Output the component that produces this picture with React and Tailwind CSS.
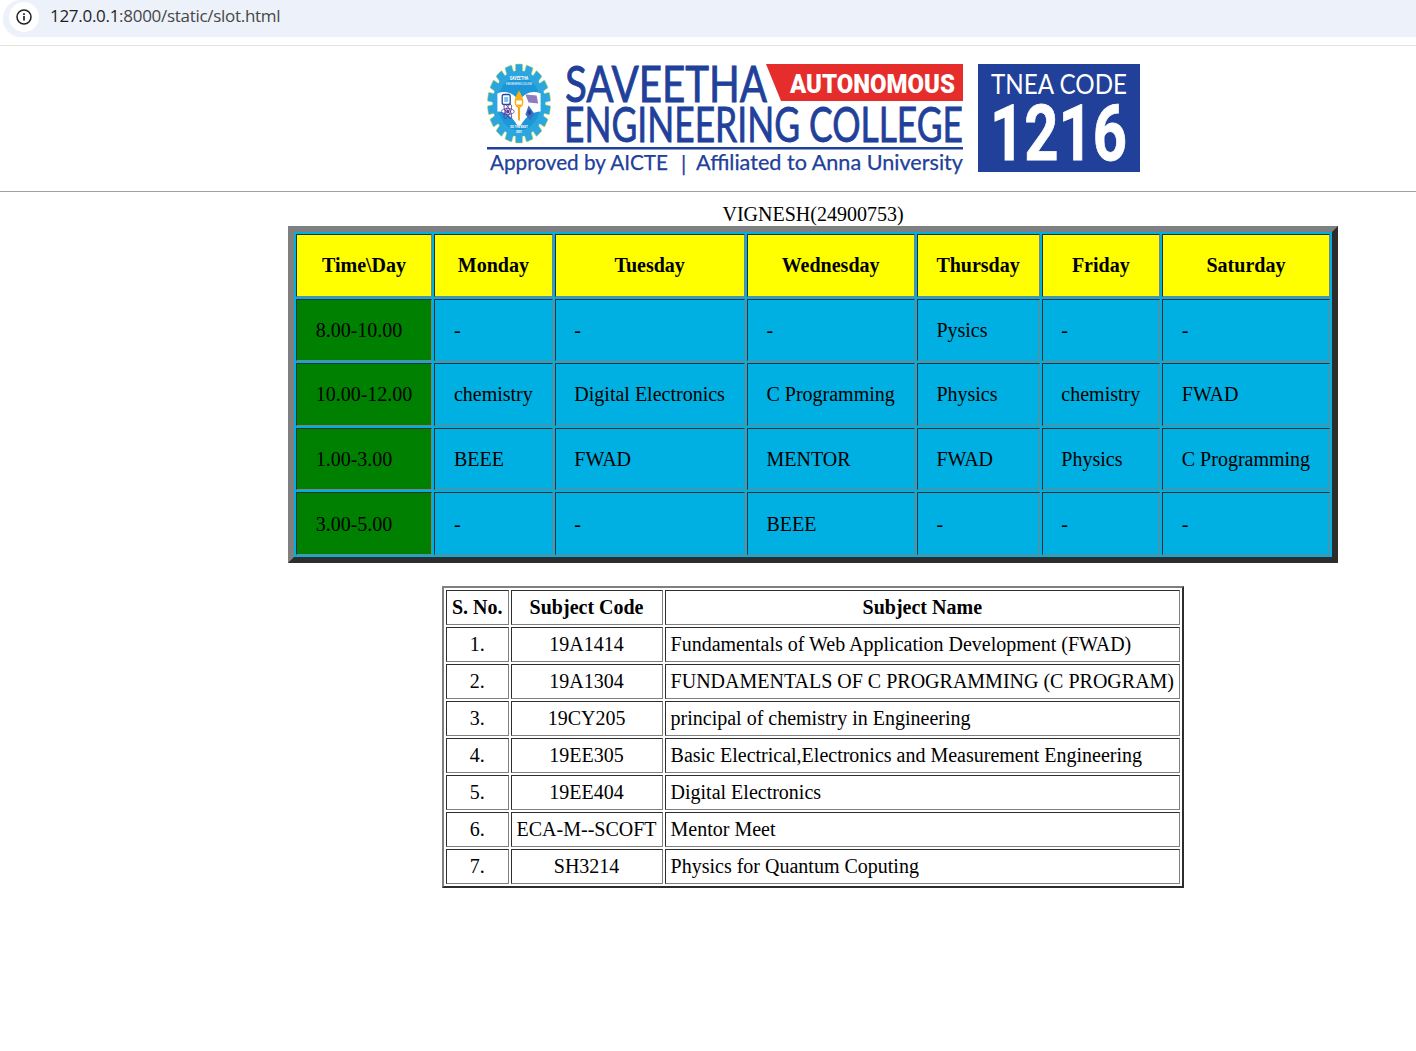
const days = ["Time\\Day", "Monday", "Tuesday", "Wednesday", "Thursday", "Friday", "Saturday"];
const slots = [
  ["8.00-10.00", "-", "-", "-", "Pysics", "-", "-"],
  ["10.00-12.00", "chemistry", "Digital Electronics", "C Programming", "Physics", "chemistry", "FWAD"],
  ["1.00-3.00", "BEEE", "FWAD", "MENTOR", "FWAD", "Physics", "C Programming"],
  ["3.00-5.00", "-", "-", "BEEE", "-", "-", "-"],
];
const subjects = [
  ["1.", "19A1414", "Fundamentals of Web Application Development (FWAD)"],
  ["2.", "19A1304", "FUNDAMENTALS OF C PROGRAMMING (C PROGRAM)"],
  ["3.", "19CY205", "principal of chemistry in Engineering"],
  ["4.", "19EE305", "Basic Electrical,Electronics and Measurement Engineering"],
  ["5.", "19EE404", "Digital Electronics"],
  ["6.", "ECA-M--SCOFT", "Mentor Meet"],
  ["7.", "SH3214", "Physics for Quantum Coputing"],
];

const inset = "border border-t-[#2d2d2d] border-l-[#2d2d2d] border-r-[#808080] border-b-[#808080]";
const teeth = Array.from({ length: 18 }, (_, i) => i * 20);

function Emblem() {
  return (
    <g transform="translate(519 103.5) scale(0.8 1)">
      {teeth.map((a) => (
        <rect key={a} x="-4.5" y="-39.5" width="9" height="10" rx="1" fill="#2ba6de" stroke="#cfe05a" strokeWidth="0.6" transform={`rotate(${a})`} />
      ))}
      <circle r="33" fill="#2ba6de" />
      <circle r="27" fill="#1e97d8" />
      <text y="-24" textAnchor="middle" fontSize="4.6" fontWeight="700" fill="#fff" fontFamily="Roboto, sans-serif">SAVEETHA</text>
      <text y="-18.5" textAnchor="middle" fontSize="3" fill="#fff" fontFamily="Roboto, sans-serif">ENGINEERING COLLEGE</text>
      <path d="M-27 -10 Q-12 -15 0 -3 Q12 -15 27 -10 L27 8 Q12 8 2 22 L-2 22 Q-12 8 -27 8 Z" fill="#fff" />
      <rect x="-21" y="-9" width="10" height="10" rx="2" fill="#fff" stroke="#1f4aa0" strokeWidth="1.6" />
      <rect x="-18.5" y="-6.5" width="5" height="5" fill="#7cc4ee" />
      <path d="M8 -9 L22 -8 L24 0 L12 -1 Z" fill="#8f7cc0" />
      <circle cx="-14" cy="8" r="2" fill="#5b3c98" />
      <ellipse cx="-14" cy="8" rx="8" ry="3" fill="none" stroke="#5b3c98" strokeWidth="0.9" />
      <ellipse cx="-14" cy="8" rx="8" ry="3" fill="none" stroke="#5b3c98" strokeWidth="0.9" transform="rotate(60 -14 8)" />
      <ellipse cx="-14" cy="8" rx="8" ry="3" fill="none" stroke="#5b3c98" strokeWidth="0.9" transform="rotate(-60 -14 8)" />
      <path d="M12 2 L19 10 L14 17 L8 11 Z" fill="#3f6fc0" />
      <circle cx="13" cy="9" r="2.4" fill="#1f4aa0" />
      <path d="M-1.6 -1 L1.6 -1 L1.2 17 L-1.2 17 Z" fill="#f5a623" />
      <path d="M0 -13 Q6 -5 5.5 -1 Q5 4 0 4 Q-5 4 -5.5 -1 Q-6 -5 0 -13 Z" fill="#f7b21b" />
      <rect x="-3.5" y="-3" width="7" height="4" fill="#fff" />
      <text y="25" textAnchor="middle" fontSize="3.6" fontWeight="700" fill="#fff" fontFamily="Roboto, sans-serif">DO THE BEST</text>
      <text y="30" textAnchor="middle" fontSize="3.4" fontWeight="700" fill="#fff" fontFamily="Roboto, sans-serif">2001</text>
    </g>
  );
}

function Logo() {
  const blue = "#21409a";
  return (
    <svg viewBox="483 56 660 124" width="660" height="124" className="block mx-auto">
      <Emblem />
      <text x="565" y="102" fontSize="51" fontWeight="400" fill={blue} stroke={blue} strokeWidth="0.9" fontFamily="Lato, sans-serif" textLength="202" lengthAdjust="spacingAndGlyphs">SAVEETHA</text>
      <text x="564" y="142" fontSize="48" fontWeight="400" fill={blue} stroke={blue} strokeWidth="0.8" fontFamily="Lato, sans-serif" textLength="399" lengthAdjust="spacingAndGlyphs">ENGINEERING COLLEGE</text>
      <polygon points="766,64 963,64 963,101 781,101" fill="#e52d2b" />
      <text x="790" y="93" fontSize="26" fontWeight="900" fill="#fff" fontFamily="Roboto, sans-serif" textLength="165" lengthAdjust="spacingAndGlyphs">AUTONOMOUS</text>
      <rect x="487" y="147" width="476" height="2.5" fill={blue} />
      <text x="490" y="170" fontSize="21" fill={blue} stroke={blue} strokeWidth="0.25" fontFamily="Lato, sans-serif" textLength="178" lengthAdjust="spacingAndGlyphs">Approved by AICTE</text>
      <text x="681" y="171" fontSize="21" fill={blue} stroke={blue} strokeWidth="0.25" fontFamily="Lato, sans-serif">|</text>
      <text x="696" y="170" fontSize="21" fill={blue} stroke={blue} strokeWidth="0.25" fontFamily="Lato, sans-serif" textLength="267" lengthAdjust="spacingAndGlyphs">Affiliated to Anna University</text>
      <rect x="978" y="64" width="162" height="108" fill={blue} />
      <text x="991" y="94" fontSize="27" fontWeight="400" fill="#fff" fontFamily="Lato, sans-serif" textLength="136" lengthAdjust="spacingAndGlyphs">TNEA CODE</text>
      <text x="990" y="160" fontSize="78" fontWeight="700" fill="#fff" stroke="#fff" strokeWidth="0.8" fontFamily="Roboto, sans-serif" textLength="137" lengthAdjust="spacingAndGlyphs">1216</text>
    </svg>
  );
}

export default function App() {
  return (
    <div className="bg-white text-black text-[20px] font-['Liberation_Serif',serif]">
      <div className="h-[46px] border-b border-[#e3e3e3] pl-[3px]">
        <div className="h-[37px] bg-[#ecf1fa] rounded-l-[18px] flex items-start pl-[6px] pt-[2px]">
          <div className="w-[30px] h-[30px] rounded-full bg-white flex items-center justify-center">
            <svg width="16" height="16" viewBox="0 0 16 16" fill="none" stroke="#1f1f1f" strokeWidth="1.5">
              <circle cx="8" cy="8" r="7" />
              <path d="M8 7v4.6" strokeWidth="1.7" />
              <path d="M8 4.2v1.7" strokeWidth="1.7" />
            </svg>
          </div>
          <div className="ml-[11px] text-[17px] leading-[28px] font-['Open_Sans',sans-serif] text-[#474747] tracking-[-0.29px]">
            <span className="text-[#1f1f1f]">127.0.0.1</span>:8000/static/slot.html
          </div>
        </div>
      </div>

      <div className="h-[145px] pl-[210px] pt-[10px]">
        <Logo />
      </div>
      <hr className="border-0 h-px bg-[#a0a0a0]" />

      <div className="ml-[210px] pt-[11px] pb-[163px]">
        <div className="text-center leading-[22px] pb-px">VIGNESH(24900753)</div>
        <table className="mx-auto border-separate border-spacing-[2px] bg-[#00b0e2] border-[6px] border-t-[#808080] border-l-[#808080] border-r-[#2d2d2d] border-b-[#2d2d2d]">
          <thead>
            <tr>
              {days.map((d) => (
                <th key={d} className={`${inset} bg-[#ffff00] py-[19.3px] pl-[18.7px] pr-[18.9px] font-bold text-center leading-[22px]`}>{d}</th>
              ))}
            </tr>
          </thead>
          <tbody>
            {slots.map((row) => (
              <tr key={row[0]}>
                {row.map((c, i) => (
                  <td key={i} className={`${inset} py-[19.3px] pl-[18.7px] pr-[18.9px] text-left leading-[22px] ${i === 0 ? "bg-[#008000]" : ""}`}>{c}</td>
                ))}
              </tr>
            ))}
          </tbody>
        </table>

        <table className="mx-auto mt-[23px] border-separate border-spacing-[2px] border-2 border-t-[#808080] border-l-[#808080] border-r-[#2d2d2d] border-b-[#2d2d2d]">
          <thead>
            <tr>
              {["S. No.", "Subject Code", "Subject Name"].map((h) => (
                <th key={h} className={`${inset} px-[5px] py-[5.5px] font-bold text-center leading-[22px]`}>{h}</th>
              ))}
            </tr>
          </thead>
          <tbody>
            {subjects.map((r) => (
              <tr key={r[0]}>
                <td className={`${inset} px-[5px] py-[5.5px] text-center leading-[22px]`}>{r[0]}</td>
                <td className={`${inset} px-[5px] py-[5.5px] text-center leading-[22px]`}>{r[1]}</td>
                <td className={`${inset} px-[5px] py-[5.5px] text-left leading-[22px]`}>{r[2]}</td>
              </tr>
            ))}
          </tbody>
        </table>
      </div>
    </div>
  );
}
